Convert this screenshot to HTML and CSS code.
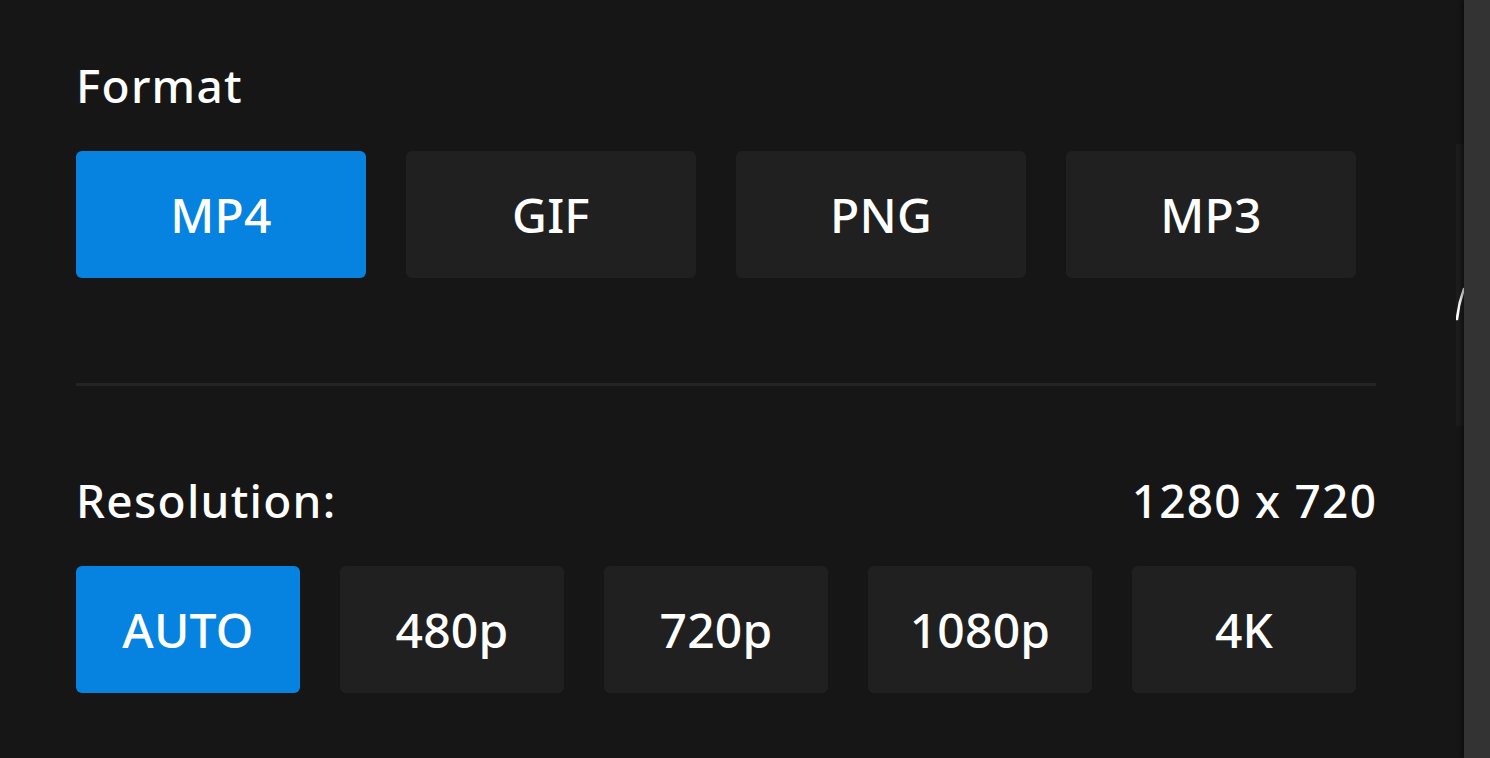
FILE: index.html
```html
<!DOCTYPE html>
<html lang="en">
<head>
<meta charset="utf-8">
<title>Export settings</title>
<link rel="stylesheet" href="styles.css">
</head>
<body>
  <div class="layout">
    <main class="content">
      <section class="group">
        <div class="label-row">
          <span class="label">Format</span>
        </div>
        <div class="options options-4">
          <button class="opt active">MP4</button>
          <button class="opt">GIF</button>
          <button class="opt">PNG</button>
          <button class="opt">MP3</button>
        </div>
      </section>
      <hr class="divider">
      <section class="group">
        <div class="label-row">
          <span class="label">Resolution:</span>
          <span class="label value">1280 x 720</span>
        </div>
        <div class="options options-5">
          <button class="opt active">AUTO</button>
          <button class="opt">480p</button>
          <button class="opt">720p</button>
          <button class="opt">1080p</button>
          <button class="opt">4K</button>
        </div>
      </section>
    </main>
    <div class="peek">
      <div class="peek-card">
        <svg class="peek-glyph" width="8" height="34" viewBox="0 0 8 34">
          <path d="M1 32 C2 22 5 10 8 2" fill="none" stroke="#ffffff" stroke-width="2.6" stroke-linecap="round"/>
        </svg>
      </div>
    </div>
    <div class="scrollbar"></div>
  </div>
</body>
</html>
```
FILE: styles.css
```css
* { box-sizing: border-box; }

html, body {
  margin: 0;
  height: 100%;
  background: #161616;
  overflow: hidden;
}

body {
  font-family: "Noto Sans", "Open Sans", sans-serif;
  color: #ffffff;
}

.layout {
  display: flex;
  height: 758px;
}

.content {
  width: 1456px;
  flex: none;
  padding: 54px 80px 0 76px;
}

.label-row {
  display: flex;
  justify-content: space-between;
  align-items: baseline;
  margin-bottom: 35px;
}

.label {
  font-size: 46px;
  line-height: 62px;
  font-weight: 500;
  letter-spacing: 1.25px;
}

.value {
  margin-right: -1.25px;
}

.options {
  display: grid;
  gap: 40px;
  width: 1280px;
}

.options-4 { grid-template-columns: repeat(4, 290px); }
.options-5 { grid-template-columns: repeat(5, 224px); }

.opt {
  height: 127px;
  border: 0;
  border-radius: 6px;
  background: #202020;
  color: #ffffff;
  font-family: inherit;
  font-size: 48px;
  font-weight: 500;
  letter-spacing: 0.2px;
  padding: 0;
  cursor: pointer;
}

.opt.active {
  background: #0683e0;
}

.divider {
  border: 0;
  height: 3px;
  background: #242424;
  margin: 105px 0 83px 0;
}

.peek {
  width: 8px;
  flex: none;
  padding-top: 144px;
}

.peek-card {
  height: 282px;
  background: #1c1c1c;
  padding-top: 143px;
}

.peek-glyph { display: block; }

.scrollbar {
  width: 26px;
  flex: none;
  background: #333333;
  box-shadow: -3px 0 3px rgba(0, 0, 0, 0.35);
}
```
